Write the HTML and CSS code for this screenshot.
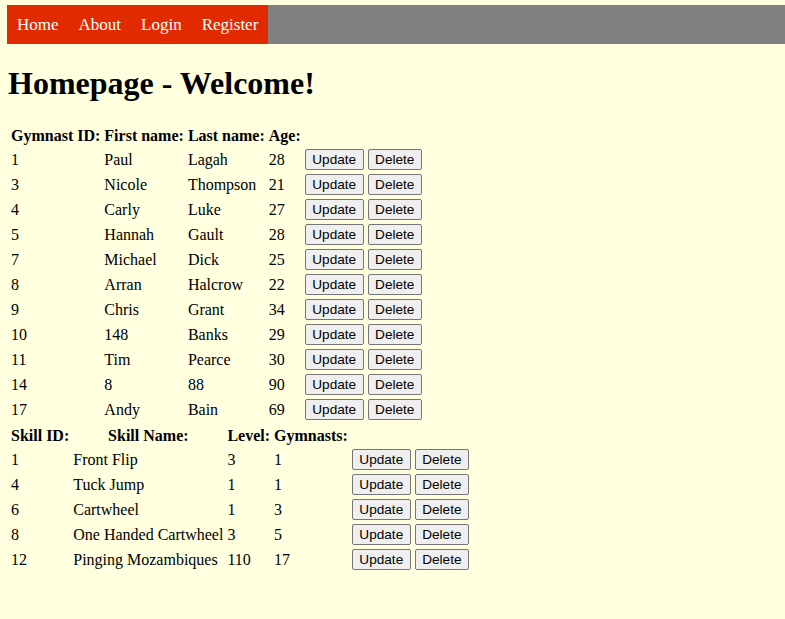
FILE: index.html
```html
<!DOCTYPE html>
<html>
<head>
<meta charset="utf-8">
<title>Homepage</title>
<link rel="stylesheet" href="styles.css">
</head>
<body>
<nav class="nav">
  <ul class="menu">
    <li><a href="#">Home</a></li>
    <li><a href="#">About</a></li>
    <li><a href="#">Login</a></li>
    <li><a href="#">Register</a></li>
  </ul>
</nav>
<main class="page">
<h1 class="title">Homepage - Welcome!</h1>
<table class="data">
  <tr><th>Gymnast ID:</th><th>First name:</th><th>Last name:</th><th>Age:</th></tr>
  <tr><td>1</td><td>Paul</td><td>Lagah</td><td>28</td><td><button class="btn">Update</button></td><td><button class="btn">Delete</button></td></tr>
  <tr><td>3</td><td>Nicole</td><td>Thompson</td><td>21</td><td><button class="btn">Update</button></td><td><button class="btn">Delete</button></td></tr>
  <tr><td>4</td><td>Carly</td><td>Luke</td><td>27</td><td><button class="btn">Update</button></td><td><button class="btn">Delete</button></td></tr>
  <tr><td>5</td><td>Hannah</td><td>Gault</td><td>28</td><td><button class="btn">Update</button></td><td><button class="btn">Delete</button></td></tr>
  <tr><td>7</td><td>Michael</td><td>Dick</td><td>25</td><td><button class="btn">Update</button></td><td><button class="btn">Delete</button></td></tr>
  <tr><td>8</td><td>Arran</td><td>Halcrow</td><td>22</td><td><button class="btn">Update</button></td><td><button class="btn">Delete</button></td></tr>
  <tr><td>9</td><td>Chris</td><td>Grant</td><td>34</td><td><button class="btn">Update</button></td><td><button class="btn">Delete</button></td></tr>
  <tr><td>10</td><td>148</td><td>Banks</td><td>29</td><td><button class="btn">Update</button></td><td><button class="btn">Delete</button></td></tr>
  <tr><td>11</td><td>Tim</td><td>Pearce</td><td>30</td><td><button class="btn">Update</button></td><td><button class="btn">Delete</button></td></tr>
  <tr><td>14</td><td>8</td><td>88</td><td>90</td><td><button class="btn">Update</button></td><td><button class="btn">Delete</button></td></tr>
  <tr><td>17</td><td>Andy</td><td>Bain</td><td>69</td><td><button class="btn">Update</button></td><td><button class="btn">Delete</button></td></tr>
</table>
<table class="data">
  <tr><th>Skill ID:</th><th>Skill Name:</th><th>Level:</th><th>Gymnasts:</th></tr>
  <tr><td>1</td><td>Front Flip</td><td>3</td><td>1</td><td><button class="btn">Update</button></td><td><button class="btn">Delete</button></td></tr>
  <tr><td>4</td><td>Tuck Jump</td><td>1</td><td>1</td><td><button class="btn">Update</button></td><td><button class="btn">Delete</button></td></tr>
  <tr><td>6</td><td>Cartwheel</td><td>1</td><td>3</td><td><button class="btn">Update</button></td><td><button class="btn">Delete</button></td></tr>
  <tr><td>8</td><td>One Handed Cartwheel</td><td>3</td><td>5</td><td><button class="btn">Update</button></td><td><button class="btn">Delete</button></td></tr>
  <tr><td>12</td><td>Pinging Mozambiques</td><td>110</td><td>17</td><td><button class="btn">Update</button></td><td><button class="btn">Delete</button></td></tr>
</table>
</main>
</body>
</html>
```

FILE: styles.css
```css
html {
  background: #ffffe0;
}
body {
  margin: 5px 0 8px 7px;
  font-family: "Liberation Serif", "Times New Roman", serif;
  font-size: 16px;
  color: #000;
  background: #ffffe0;
}
.nav {
  display: flex;
  background: #808080;
}
.menu {
  display: flex;
  list-style: none;
  margin: 0;
  padding: 0;
  background: #e22a00;
}
.menu a {
  display: block;
  padding: 10px 10px;
  font-size: 17px;
  line-height: 19px;
  color: #fff;
  text-decoration: none;
}
.page {
  display: block;
  margin: 0 8px 0 1px;
}
.title {
  font-size: 32px;
  margin: 21px 0;
}
.data {
  border-spacing: 2px;
}
.data th,
.data td {
  padding: 1px;
}
.data th {
  padding-top: 2px;
}
.btn {
  font-family: "Liberation Sans", Arial, sans-serif;
  font-size: 13.6px;
  padding: 1px 6.5px;
  background: #efefef;
  border: 1px solid #767676;
  border-radius: 2px;
  color: #000;
  height: 21px;
}
```
